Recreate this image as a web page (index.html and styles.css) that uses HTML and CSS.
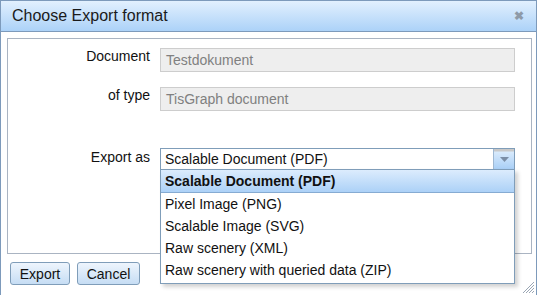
FILE: index.html
```html
<!DOCTYPE html>
<html lang="en">
<head>
  <meta charset="UTF-8">
  <title>Choose Export format</title>
  <link rel="stylesheet" href="styles.css">
</head>
<body>
  <div class="dialog">
    <!-- title bar -->
    <div class="titlebar">
      <span class="title">Choose Export format</span>
      <span class="close">&#x2716;</span>
    </div>

    <div class="content">
      <div class="panel">
        <div class="row">
          <label class="lbl">Document</label>
          <div class="field">Testdokument</div>
        </div>
        <div class="row">
          <label class="lbl">of type</label>
          <div class="field">TisGraph document</div>
        </div>
        <div class="row row-export">
          <label class="lbl">Export as</label>
          <div class="combo">
            <div class="combo-text">Scalable Document (PDF)</div>
            <div class="combo-btn">
              <svg width="9" height="5" viewBox="0 0 9 5"><path d="M0 0 H9 L4.5 5 Z" fill="#7b8ea6"/></svg>
            </div>
            <!-- opened list -->
            <ul class="options">
              <li class="sel">Scalable Document (PDF)</li>
              <li>Pixel Image (PNG)</li>
              <li>Scalable Image (SVG)</li>
              <li>Raw scenery (XML)</li>
              <li>Raw scenery with queried data (ZIP)</li>
            </ul>
          </div>
        </div>
      </div>

      <div class="buttons">
        <button class="btn btn-export">Export</button>
        <button class="btn btn-cancel">Cancel</button>
      </div>
    </div>

    <svg class="grip" width="12" height="12" viewBox="0 0 12 12">
      <path d="M11 3 L3 11 M11 6 L6 11 M11 9 L9 11 M11 0 L0 11" stroke="#9aa6b4" stroke-width="1"/>
    </svg>
  </div>
</body>
</html>
```

FILE: styles.css
```css
/* page */
body {
  margin: 0;
  font-family: "Liberation Sans", Arial, sans-serif;
  font-size: 14px;
  color: #111;
  background: #fff;
  overflow: hidden;
}

/* dialog frame */
.dialog {
  position: relative;
  width: 535px;
  height: 300px;
  border: 1px solid #7d9abb;
  background: #fff;
}

.titlebar {
  display: flex;
  justify-content: space-between;
  align-items: center;
  height: 30px;
  padding: 0 12px 0 11px;
  background: linear-gradient(#e2f0fe, #acd2f8);
  border-bottom: 1px solid #7d9abb;
}

.title {
  font-size: 16px;
  color: #1a1a1a;
}

.close {
  font-size: 12px;
  font-weight: bold;
  color: #8e9aa8;
}

.content {
  padding: 6px 4px 0 6px;
}

/* grey framed panel */
.panel {
  height: 205px;
  border: 1px solid #aab4c2;
  padding-top: 9px;
}

.row {
  display: flex;
  align-items: flex-start;
  margin-bottom: 15px;
}

.row-export {
  margin-top: 38px;
}

.lbl {
  width: 142px;
  text-align: right;
  padding-right: 10px;
  line-height: 17px;
}

.field {
  width: 348px;
  height: 21px;
  line-height: 20px;
  padding: 1px 0 0 5px;
  box-sizing: content-box;
  background: #eeeeee;
  border: 1px solid #cdcdcd;
  color: #808080;
}

/* combo box */
.combo {
  position: relative;
  display: flex;
  width: 353px;
  height: 20px;
  border: 1px solid #7f9db9;
  margin-top: -1px;
}

.combo-text {
  flex: 1;
  padding-left: 4px;
  line-height: 20px;
}

.combo-btn {
  width: 20px;
  display: flex;
  align-items: center;
  justify-content: center;
  background: linear-gradient(#c8c8c8 0, #c8c8c8 2px, #d8eafc 3px, #a9cff6);
  border-left: 1px solid #9fb8d2;
}

.options {
  position: absolute;
  top: 20px;
  left: -1px;
  width: 353px;
  margin: 0;
  padding: 0 0 2px 0;
  list-style: none;
  background: #fff;
  border: 1px solid #7f9db9;
  box-shadow: 3px 3px 4px rgba(0, 0, 0, 0.18);
}

.options li {
  height: 22px;
  line-height: 22px;
  padding-left: 4px;
}

.options li.sel {
  height: 22px;
  font-weight: bold;
  background: linear-gradient(#dcecfd, #acd1f7);
  border-bottom: 1px solid #86abd2;
}

/* bottom buttons */
.buttons {
  display: flex;
  gap: 7px;
  padding: 8px 0 0 3px;
}

.btn {
  height: 23px;
  padding: 0 7px;
  font-family: "Liberation Sans", Arial, sans-serif;
  font-size: 14px;
  color: #111;
  background: linear-gradient(#eef5fd, #c6ddf4);
  border: 1px solid #7f9db9;
  border-radius: 3px;
}

.btn-export {
  width: 60px;
}

.btn-cancel {
  width: 63px;
}

.grip {
  position: absolute;
  right: 1px;
  top: 281px;
}
```
